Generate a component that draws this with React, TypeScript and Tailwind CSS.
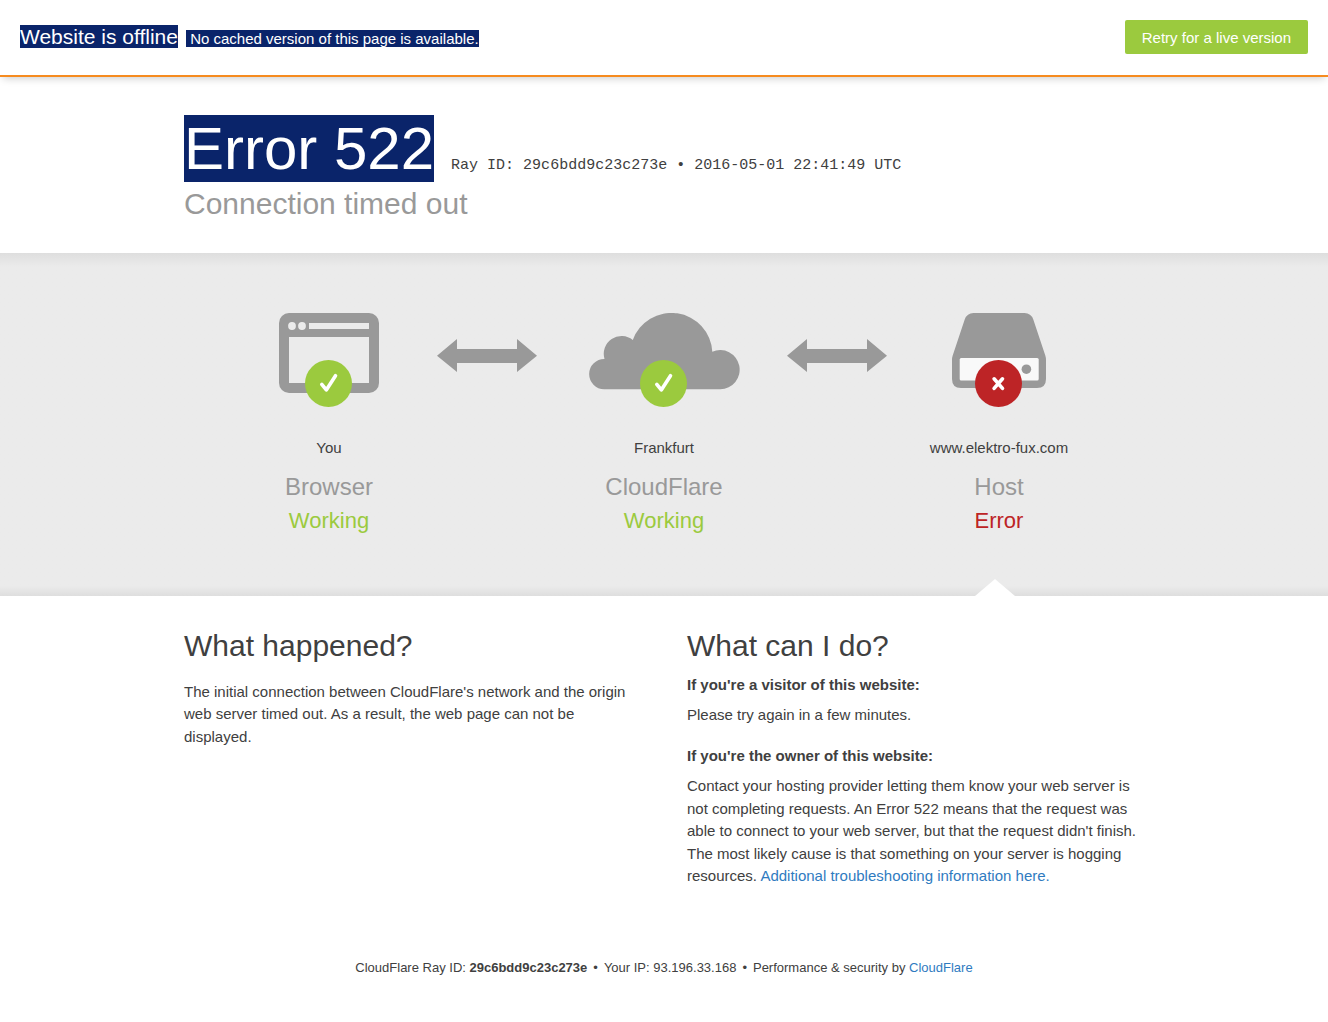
import type { ReactNode } from "react";

type Status = "ok" | "error";

const LINK = "text-[#2f7bbf] hover:text-[#f68b1f]";

function Badge({ cx, status }: { cx: number; status: Status }) {
  return (
    <g transform={`translate(${cx} 70.5)`} stroke="#fff" fill="none" strokeLinecap="round" strokeLinejoin="round">
      <circle r="23.5" stroke="none" fill={status === "ok" ? "#9bca3e" : "#bd2426"} />
      {status === "ok" ? (
        <path d="M-6.7 .8L-2.2 6.4L7 -7.8" strokeWidth="3.6" />
      ) : (
        <path d="M-4.4 -4.7L4 4.9M4 -4.7L-4.4 4.9" strokeWidth="3.6" />
      )}
    </g>
  );
}

function BrowserIcon() {
  return (
    <svg width="100" height="94" viewBox="0 0 100 94" aria-hidden="true">
      <rect width="100" height="80" rx="10" fill="#999" />
      <g fill="#ebebeb">
        <circle cx="13" cy="13" r="3.9" />
        <circle cx="23" cy="13" r="3.9" />
        <path d="M30 10H90V16H30ZM10 24H90V70H10Z" />
      </g>
      <Badge cx={49.5} status="ok" />
    </svg>
  );
}

function CloudIcon() {
  return (
    <svg width="151" height="94" viewBox="0 0 151 94" aria-hidden="true">
      <path
        d="M15.2 76.3A15.2 15.2 0 0 1 15.5 45.9A17.8 17.8 0 0 1 43.8 27A41 41 0 0 1 123.3 38.7A19.6 19.6 0 1 1 131.3 76.3Z"
        fill="#999"
      />
      <Badge cx={74.5} status="ok" />
    </svg>
  );
}

function HostIcon() {
  return (
    <svg width="94" height="94" viewBox="0 0 94 94" aria-hidden="true">
      <path
        d="M21.5 0H72.5Q79 0 81.3 6.5L93.3 42.5Q94 44.5 94 47V66Q94 75 85 75H9Q0 75 0 66V47Q0 44.5 .7 42.5L12.7 6.5Q15 0 21.5 0Z"
        fill="#999"
      />
      <rect x="7.7" y="45" width="79" height="22.5" rx="1.5" fill="#f9f9f9" />
      <circle cx="74.4" cy="56.2" r="4.8" fill="#999" />
      <Badge cx={46.5} status="error" />
    </svg>
  );
}

function Arrow() {
  return (
    <svg className="mt-[26px]" width="100" height="33" viewBox="0 0 100 33" aria-hidden="true">
      <path d="M0 16.7L20 0V10H80V0L100 16.7L80 33V24H20V33Z" fill="#999" />
    </svg>
  );
}

function Node({
  icon,
  place,
  name,
  status,
  className = "",
}: {
  icon: ReactNode;
  place: string;
  name: string;
  status: Status;
  className?: string;
}) {
  return (
    <div className={`flex flex-col items-center text-center ${className}`}>
      {icon}
      <span className="mt-[30px] leading-normal">{place}</span>
      <h3 className="mt-[9px] text-[24px] leading-9 text-[#999]">{name}</h3>
      <span className={`text-[22px] leading-8 ${status === "ok" ? "text-[#9bca3e]" : "text-[#bd2426]"}`}>
        {status === "ok" ? "Working" : "Error"}
      </span>
    </div>
  );
}

export default function App() {
  return (
    <div className="font-['Liberation_Sans',Arial,sans-serif] text-[15px] leading-normal text-[#404040]">
      <header className="flex items-start justify-between border-b-2 border-[#f68b1f] px-5 pt-5 pb-[21px] shadow-[0_4px_8px_-3px_rgba(0,0,0,0.22)]">
        <p className="flex items-baseline gap-2 pt-1 text-white">
          <strong className="text-[21px] leading-[26px] font-normal">
            <span className="bg-[#0a246a]">Website is offline</span>
          </strong>
          <span>
            <span className="bg-[#0a246a]">&nbsp;No cached version of this page is available.</span>
          </span>
        </p>
        <button type="button" className="h-[34px] rounded-xs bg-[#9bca3e] px-[17px] pt-0.5 text-white">
          Retry for a live version
        </button>
      </header>

      <div className="mx-auto max-w-[960px] pt-[37px] pb-[30px]">
        <div className="flex items-baseline gap-[17px]">
          <h1 className="text-[60px] leading-[70px] text-white">
            <span className="bg-[#0a246a]">Error 522</span>
          </h1>
          <span className="font-['Liberation_Mono','Courier_New',monospace]">
            Ray ID: 29c6bdd9c23c273e • 2016-05-01 22:41:49 UTC
          </span>
        </div>
        <h2 className="text-[30px] leading-[39px] text-[#999]">Connection timed out</h2>
      </div>

      <section className="flex flex-col bg-linear-to-b from-[#dedede] via-[#ebebeb] via-[4%] to-[#ebebeb]">
        <div className="mx-auto grid w-full max-w-[960px] grid-cols-[216fr_100px_250fr_100px_224fr] pt-[60px] pr-[33px] pb-[42px] pl-[37px]">
          <Node icon={<BrowserIcon />} place="You" name="Browser" status="ok" />
          <Arrow />
          <Node icon={<CloudIcon />} place="Frankfurt" name="CloudFlare" status="ok" className="pl-1" />
          <Arrow />
          <Node icon={<HostIcon />} place="www.elektro-fux.com" name="Host" status="error" />
        </div>
        <div className="bg-linear-to-t from-[#dedede] to-[#ebebeb] to-60%">
          <div className="mx-auto flex max-w-[960px] justify-end pr-[129px]">
            <svg width="40" height="17" viewBox="0 0 40 17" aria-hidden="true">
              <path d="M0 17L20 0L40 17Z" fill="#fff" />
            </svg>
          </div>
        </div>
      </section>

      <main className="mx-auto grid max-w-[960px] grid-cols-2 gap-[46px] pt-[30px]">
        <section>
          <h2 className="text-[30px] leading-[39px]">What happened?</h2>
          <p className="mt-4">
            The initial connection between CloudFlare's network and the origin web server timed out. As a result, the
            web page can not be displayed.
          </p>
        </section>
        <section>
          <h2 className="text-[30px] leading-[39px]">What can I do?</h2>
          <h5 className="mt-[9px] font-bold">If you're a visitor of this website:</h5>
          <p className="mt-2">Please try again in a few minutes.</p>
          <h5 className="mt-[18px] font-bold">If you're the owner of this website:</h5>
          <p className="mt-2">
            Contact your hosting provider letting them know your web server is not completing requests. An Error 522
            means that the request was able to connect to your web server, but that the request didn't finish. The most
            likely cause is that something on your server is hogging resources.{" "}
            <a href="#troubleshooting" className={LINK}>
              Additional troubleshooting information here.
            </a>
          </p>
        </section>
      </main>

      <footer className="mx-auto flex max-w-[960px] justify-center gap-1.5 pt-[70px] pb-[45px] text-[13px]">
        <span>
          CloudFlare Ray ID: <strong>29c6bdd9c23c273e</strong>
        </span>
        <span>•</span>
        <span>Your IP: 93.196.33.168</span>
        <span>•</span>
        <span>
          Performance &amp; security by{" "}
          <a href="#cloudflare" className={LINK}>
            CloudFlare
          </a>
        </span>
      </footer>
    </div>
  );
}
